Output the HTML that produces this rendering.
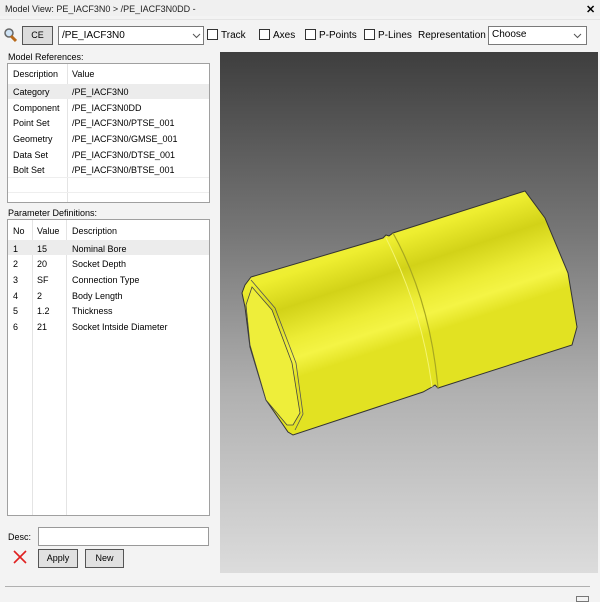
<!DOCTYPE html>
<html><head><meta charset="utf-8"><style>
*{margin:0;padding:0;box-sizing:border-box}
body{width:600px;height:600px;background:#f3f3f3;font-family:"Liberation Sans",sans-serif;font-size:9px;color:#000;position:relative;overflow:hidden}
.a{position:absolute;white-space:nowrap}
.cb{position:absolute;width:11px;height:11px;border:1px solid #333;background:#fff}
.box{position:absolute;background:#fff;border:1px solid #a0a0a0}
.btn{position:absolute;background:#e1e1e1;border:1px solid #555;text-align:center}
</style></head><body>
<div class="a" style="left:0;top:0;width:600px;height:16px;background:#f0f0f0"></div>
<div class="a" style="left:5px;top:4px;color:#222">Model View: PE_IACF3N0 &gt; /PE_IACF3N0DD -</div>
<div class="a" style="left:586px;top:3px;font-weight:bold;font-size:11px">✕</div>
<div class="a" style="left:0;top:19px;width:600px;height:1px;background:#e4e4e4"></div>
<svg class="a" style="left:3px;top:27px" width="14" height="16"><circle cx="6" cy="6" r="4" fill="#cfe3f5" stroke="#666" stroke-width="1.5"/><path d="M8 9 L13 14" stroke="#b86a1c" stroke-width="3"/></svg>
<div class="btn" style="left:22px;top:26px;width:31px;height:19px;line-height:17px;background:#dcdcdc">CE</div>
<div class="box" style="left:58px;top:26px;width:146px;height:19px;border-color:#7a7a7a"></div>
<div class="a" style="left:62px;top:30px;font-size:10px">/PE_IACF3N0</div>
<svg class="a" style="left:192px;top:33px" width="9" height="6"><path d="M1 1 L4.5 4.5 L8 1" fill="none" stroke="#555"/></svg>
<div class="cb" style="left:207px;top:29px"></div><div class="a" style="left:221px;top:30px;font-size:10px">Track</div>
<div class="cb" style="left:259px;top:29px"></div><div class="a" style="left:273px;top:30px;font-size:10px">Axes</div>
<div class="cb" style="left:305px;top:29px"></div><div class="a" style="left:319px;top:30px;font-size:10px">P-Points</div>
<div class="cb" style="left:364px;top:29px"></div><div class="a" style="left:378px;top:30px;font-size:10px">P-Lines</div>
<div class="a" style="left:418px;top:30px;font-size:10px">Representation</div>
<div class="box" style="left:488px;top:26px;width:99px;height:19px;border-color:#7a7a7a"></div>
<div class="a" style="left:492px;top:29px;font-size:10px">Choose</div>
<svg class="a" style="left:573px;top:33px" width="9" height="6"><path d="M1 1 L4.5 4.5 L8 1" fill="none" stroke="#555"/></svg>

<div class="a" style="left:8px;top:52px">Model References:</div>
<div class="box" style="left:7px;top:63px;width:203px;height:140px"></div>
<div class="a" style="left:67px;top:64px;width:1px;height:138px;background:#e4e4e4"></div>
<div class="a" style="left:8px;top:84px;width:201px;height:15px;background:#ececec"></div>
<div class="a" style="left:13px;top:69px">Description</div><div class="a" style="left:72px;top:69px">Value</div>
<div class="a" style="left:13px;top:87px">Category</div><div class="a" style="left:72px;top:87px">/PE_IACF3N0</div>
<div class="a" style="left:13px;top:103px">Component</div><div class="a" style="left:72px;top:103px">/PE_IACF3N0DD</div>
<div class="a" style="left:13px;top:118px">Point Set</div><div class="a" style="left:72px;top:118px">/PE_IACF3N0/PTSE_001</div>
<div class="a" style="left:13px;top:134px">Geometry</div><div class="a" style="left:72px;top:134px">/PE_IACF3N0/GMSE_001</div>
<div class="a" style="left:13px;top:150px">Data Set</div><div class="a" style="left:72px;top:150px">/PE_IACF3N0/DTSE_001</div>
<div class="a" style="left:13px;top:165px">Bolt Set</div><div class="a" style="left:72px;top:165px">/PE_IACF3N0/BTSE_001</div>
<div class="a" style="left:8px;top:177px;width:201px;height:1px;background:#eee"></div>
<div class="a" style="left:8px;top:192px;width:201px;height:1px;background:#eee"></div>

<div class="a" style="left:8px;top:208px">Parameter Definitions:</div>
<div class="box" style="left:7px;top:219px;width:203px;height:297px"></div>
<div class="a" style="left:32px;top:220px;width:1px;height:295px;background:#e4e4e4"></div>
<div class="a" style="left:66px;top:220px;width:1px;height:295px;background:#e4e4e4"></div>
<div class="a" style="left:8px;top:240px;width:201px;height:15px;background:#ececec"></div>
<div class="a" style="left:13px;top:226px">No</div><div class="a" style="left:37px;top:226px">Value</div><div class="a" style="left:72px;top:226px">Description</div>
<div class="a" style="left:13px;top:244px">1</div><div class="a" style="left:37px;top:244px">15</div><div class="a" style="left:72px;top:244px">Nominal Bore</div>
<div class="a" style="left:13px;top:259px">2</div><div class="a" style="left:37px;top:259px">20</div><div class="a" style="left:72px;top:259px">Socket Depth</div>
<div class="a" style="left:13px;top:275px">3</div><div class="a" style="left:37px;top:275px">SF</div><div class="a" style="left:72px;top:275px">Connection Type</div>
<div class="a" style="left:13px;top:291px">4</div><div class="a" style="left:37px;top:291px">2</div><div class="a" style="left:72px;top:291px">Body Length</div>
<div class="a" style="left:13px;top:306px">5</div><div class="a" style="left:37px;top:306px">1.2</div><div class="a" style="left:72px;top:306px">Thickness</div>
<div class="a" style="left:13px;top:322px">6</div><div class="a" style="left:37px;top:322px">21</div><div class="a" style="left:72px;top:322px">Socket Intside Diameter</div>

<div class="a" style="left:8px;top:532px">Desc:</div>
<div class="box" style="left:38px;top:527px;width:171px;height:19px;border-color:#999"></div>
<svg class="a" style="left:13px;top:550px" width="14" height="14"><path d="M1 1 L13 13 M13 1 L1 13" stroke="#e02020" stroke-width="1.6"/></svg>
<div class="btn" style="left:38px;top:549px;width:40px;height:19px;line-height:17px">Apply</div>
<div class="btn" style="left:85px;top:549px;width:39px;height:19px;line-height:17px">New</div>

<div class="a" style="left:220px;top:52px;width:378px;height:521px;background:linear-gradient(#3e3e3e,#777 35%,#b0b0b0 65%,#dcdcdc)"></div>
<svg class="a" style="left:220px;top:52px" width="378" height="521" viewBox="220 52 378 521">
<defs><linearGradient id="g" gradientUnits="userSpaceOnUse" x1="385" y1="215" x2="425" y2="335"><stop offset="0" stop-color="#f0f040"/><stop offset="0.2" stop-color="#eeee30"/><stop offset="0.45" stop-color="#d2d218"/><stop offset="0.7" stop-color="#ecec35"/><stop offset="0.85" stop-color="#f4f445"/><stop offset="1" stop-color="#e2e222"/></linearGradient></defs>
<polygon points="251,277 383,238 386,235 389,236 393,233 525,191 545,218 568,273 577,327 572,345 438,388 435,385 432,387 423,392 293,435 288,432 266,400 250,347 245,307 242,293 245,285" fill="url(#g)" stroke="#333" stroke-width="1"/>
<path d="M393,233 Q430,300 438,388" fill="none" stroke="#a8a820" stroke-width="1.2"/>
<path d="M386,238 Q422,310 432,387" fill="none" stroke="#f4f470" stroke-width="1"/>
<polygon points="252,287 272,310 292,363 300,413 293,425 287,425 266,400 250,345 246,305" fill="#eeee3a" stroke="#444" stroke-width="0.8"/>
<path d="M251,280 L275,308 L296,363 L303,414 L295,430" fill="none" stroke="#555" stroke-width="0.8"/>
</svg>

<div class="a" style="left:5px;top:586px;width:585px;height:1px;background:#b0b0b0"></div>
<div class="a" style="left:576px;top:596px;width:13px;height:6px;border:1px solid #777"></div>
</body></html>
